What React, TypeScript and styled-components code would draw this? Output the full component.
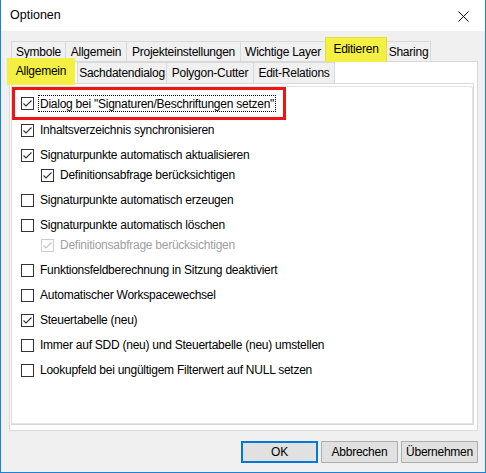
import styled, { createGlobalStyle } from "styled-components";

const GlobalStyle = createGlobalStyle`
  html, body {
    margin: 0;
    padding: 0;
    background: #ffffff;
  }
  body {
    font-family: "Liberation Sans", Arial, sans-serif;
    font-size: 12px;
    letter-spacing: -0.25px;
    color: #000000;
  }
  * {
    box-sizing: border-box;
  }
`;

type Tab = { label: string; w: number; active?: boolean };
type Opt = {
  label: string;
  checked?: boolean;
  sub?: boolean;
  disabled?: boolean;
  marked?: boolean;
};

const mainTabs: Tab[] = [
  { label: "Symbole", w: 55 },
  { label: "Allgemein", w: 62 },
  { label: "Projekteinstellungen", w: 115 },
  { label: "Wichtige Layer", w: 86 },
  { label: "Editieren", w: 62, active: true },
  { label: "Sharing", w: 45 },
];

const subTabs: Tab[] = [
  { label: "Allgemein", w: 68, active: true },
  { label: "Sachdatendialog", w: 90 },
  { label: "Polygon-Cutter", w: 88 },
  { label: "Edit-Relations", w: 82 },
];

const options: Opt[] = [
  { label: 'Dialog bei "Signaturen/Beschriftungen setzen"', checked: true, marked: true },
  { label: "Inhaltsverzeichnis synchronisieren", checked: true },
  { label: "Signaturpunkte automatisch aktualisieren", checked: true },
  { label: "Definitionsabfrage berücksichtigen", checked: true, sub: true },
  { label: "Signaturpunkte automatisch erzeugen" },
  { label: "Signaturpunkte automatisch löschen" },
  { label: "Definitionsabfrage berücksichtigen", checked: true, sub: true, disabled: true },
  { label: "Funktionsfeldberechnung in Sitzung deaktiviert" },
  { label: "Automatischer Workspacewechsel" },
  { label: "Steuertabelle (neu)", checked: true },
  { label: "Immer auf SDD (neu) und Steuertabelle (neu) umstellen" },
  { label: "Lookupfeld bei ungültigem Filterwert auf NULL setzen" },
];

const CheckBox = ({ checked, disabled }: { checked?: boolean; disabled?: boolean }) => (
  <Box $disabled={disabled}>
    {checked && (
      <svg width="11" height="11" viewBox="0 0 11 11">
        <polyline
          points="1.5,5.5 4,8 9.5,2.5"
          fill="none"
          stroke={disabled ? "#c4c4c4" : "#333333"}
          strokeWidth="1.1"
        />
      </svg>
    )}
  </Box>
);

const App = () => {
  return (
    <>
      <GlobalStyle />
      <Window>
        <TitleBar>
          <Title>Optionen</Title>
          <Close>
            <svg width="11" height="11" viewBox="0 0 11 11">
              <path d="M0.5 0.5 L10.5 10.5 M10.5 0.5 L0.5 10.5" stroke="#000" strokeWidth="1" />
            </svg>
          </Close>
        </TitleBar>
        <Body>
          <MainStrip>
            {mainTabs.map((t) => (
              <MainTab key={t.label} $w={t.w} $active={t.active}>
                {t.label}
              </MainTab>
            ))}
          </MainStrip>
          <OuterPage>
            <SubStrip>
              {subTabs.map((t) => (
                <SubTab key={t.label} $w={t.w} $active={t.active}>
                  {t.label}
                </SubTab>
              ))}
            </SubStrip>
            <InnerPage>
              <List>
                {options.map((o, i) =>
                  o.marked ? (
                    <Marked key={i}>
                      <CheckBox checked={o.checked} />
                      <Focused>{o.label}</Focused>
                    </Marked>
                  ) : (
                    <Item key={i} $sub={o.sub}>
                      <CheckBox checked={o.checked} disabled={o.disabled} />
                      <Label $disabled={o.disabled}>{o.label}</Label>
                    </Item>
                  )
                )}
              </List>
            </InnerPage>
          </OuterPage>
          <Footer>
            <Button $default>OK</Button>
            <Button>Abbrechen</Button>
            <Button>Übernehmen</Button>
          </Footer>
        </Body>
      </Window>
    </>
  );
};

const Window = styled.div`
  width: 486px;
  height: 473px;
  display: flex;
  flex-direction: column;
  background: #f0f0f0;
  border: 1px solid #1883d7;
  border-top: none;
`;

const TitleBar = styled.div`
  height: 31px;
  flex: none;
  display: flex;
  align-items: center;
  justify-content: space-between;
  background: #ffffff;
  padding: 0 16px 0 9px;
`;

const Title = styled.span`
  font-size: 12.5px;
  letter-spacing: 0;
  margin-top: -1px;
`;

const Close = styled.span`
  display: flex;
  width: 11px;
  height: 11px;
  margin-top: 1px;
`;

const Body = styled.div`
  flex: 1;
  display: flex;
  flex-direction: column;
  padding: 0 7px 0 8px;
`;

const MainStrip = styled.div`
  height: 30px;
  display: flex;
  align-items: flex-end;
  padding-left: 2px;
`;

const MainTab = styled.div<{ $w: number; $active?: boolean }>`
  width: ${(p) => p.$w}px;
  height: ${(p) => (p.$active ? 25 : 20)}px;
  margin-right: -1px;
  margin-bottom: ${(p) => (p.$active ? -1 : 0)}px;
  position: relative;
  z-index: ${(p) => (p.$active ? 1 : 0)};
  display: flex;
  align-items: center;
  justify-content: center;
  padding-bottom: ${(p) => (p.$active ? 3 : 0)}px;
  background: ${(p) => (p.$active ? "#f3f043" : "#f0f0f0")};
  border: 1px solid ${(p) => (p.$active ? "#e3df3a" : "#d9d9d9")};
  border-bottom: none;
  white-space: nowrap;
`;

const OuterPage = styled.div`
  height: 370px;
  display: flex;
  flex-direction: column;
  background: #ffffff;
  border: 1px solid #d9d9d9;
  padding: 0 3px 5px 1px;
`;

const SubStrip = styled.div`
  height: 21px;
  flex: none;
  display: flex;
  align-items: flex-end;
`;

const SubTab = styled.div<{ $w: number; $active?: boolean }>`
  width: ${(p) => p.$w}px;
  height: ${(p) => (p.$active ? 27 : 21)}px;
  margin-left: ${(p) => (p.$active ? -4 : 0)}px;
  margin-right: ${(p) => (p.$active ? 2 : -1)}px;
  margin-bottom: ${(p) => (p.$active ? -2 : 0)}px;
  position: relative;
  z-index: ${(p) => (p.$active ? 1 : 0)};
  display: flex;
  align-items: center;
  justify-content: center;
  padding-bottom: ${(p) => (p.$active ? 1 : 0)}px;
  background: ${(p) => (p.$active ? "#f3f043" : "#f0f0f0")};
  border: ${(p) => (p.$active ? "none" : "1px solid #d9d9d9")};
  border-bottom: none;
  white-space: nowrap;
`;

const InnerPage = styled.div`
  flex: 1;
  display: flex;
  border: 1px solid #d9d9d9;
  padding: 2px 0 0 0;
`;

const List = styled.div`
  flex: 1;
  display: flex;
  flex-direction: column;
  gap: 5px;
  border: 1px solid #e0e4e9;
  border-left: none;
  border-top-right-radius: 3px;
`;

const Marked = styled.div`
  width: 274px;
  height: 33px;
  flex: none;
  display: flex;
  align-items: center;
  padding-left: 6px;
  margin-bottom: -5px;
  border: 3px solid #f01414;
`;

const Item = styled.div<{ $sub?: boolean }>`
  height: 20px;
  flex: none;
  display: flex;
  align-items: center;
  padding-left: ${(p) => (p.$sub ? 29 : 9)}px;
  margin-top: ${(p) => (p.$sub ? -5 : 0)}px;
`;

const Box = styled.span<{ $disabled?: boolean }>`
  width: 13px;
  height: 13px;
  flex: none;
  display: flex;
  background: #ffffff;
  border: 1px solid ${(p) => (p.$disabled ? "#cccccc" : "#333333")};
`;

const Label = styled.span<{ $disabled?: boolean }>`
  margin-left: 6px;
  white-space: nowrap;
  color: ${(p) => (p.$disabled ? "#a0a0a0" : "#000000")};
`;

const Focused = styled.span`
  height: 17px;
  display: flex;
  align-items: center;
  margin-left: 4px;
  padding: 0 1px;
  border: 1px dotted #000000;
  white-space: nowrap;
`;

const Footer = styled.div`
  display: flex;
  justify-content: flex-end;
  gap: 3px;
  padding-top: 10px;
`;

const Button = styled.button<{ $default?: boolean }>`
  width: 77px;
  height: 22px;
  padding: 0;
  font-family: inherit;
  font-size: 12px;
  letter-spacing: -0.25px;
  color: #000000;
  background: #e1e1e1;
  border: ${(p) => (p.$default ? "2px solid #0078d7" : "1px solid #adadad")};
`;

export default App;
